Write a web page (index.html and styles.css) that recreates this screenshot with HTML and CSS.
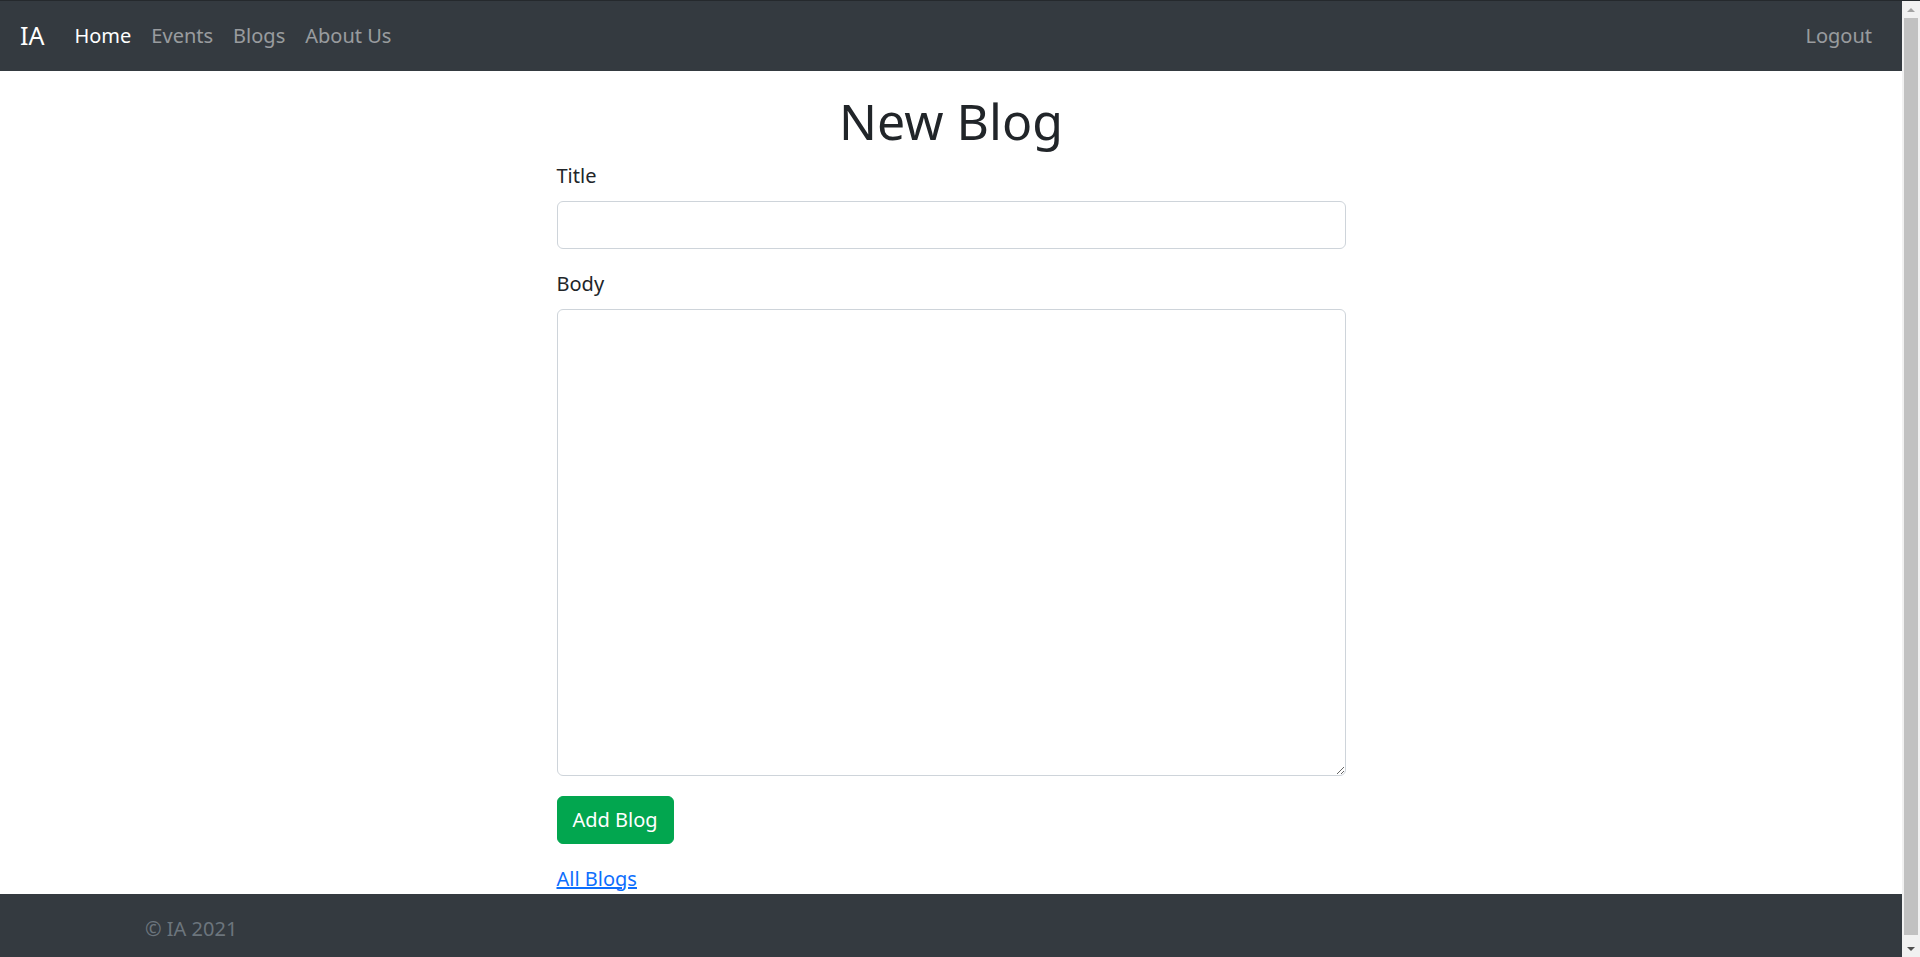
FILE: index.html
```html
<!DOCTYPE html>
<html lang="en">
<head>
<meta charset="utf-8">
<title>New Blog</title>
<link rel="stylesheet" href="styles.css">
</head>
<body>
<div class="page">
  <nav class="navbar">
    <a class="brand" href="#">IA</a>
    <ul class="nav-links">
      <li><a class="nav-link active" href="#">Home</a></li>
      <li><a class="nav-link" href="#">Events</a></li>
      <li><a class="nav-link" href="#">Blogs</a></li>
      <li><a class="nav-link" href="#">About Us</a></li>
    </ul>
    <a class="nav-link logout" href="#">Logout</a>
  </nav>
  <main class="main">
    <h1 class="page-title">New Blog</h1>
    <form class="blog-form">
      <div class="form-group">
        <label class="form-label" for="title">Title</label>
        <input class="form-control" id="title" type="text">
      </div>
      <div class="form-group">
        <label class="form-label" for="body">Body</label>
        <textarea class="form-control textarea" id="body"></textarea>
      </div>
      <button class="btn-success" type="button">Add Blog</button>
    </form>
    <a class="back-link" href="#">All Blogs</a>
  </main>
  <footer class="footer">
    <div class="footer-inner">© IA 2021</div>
  </footer>
</div>
<div class="scrollbar" aria-hidden="true">
  <div class="sb-btn"><svg width="8" height="4" viewBox="0 0 8 4"><polygon points="0,4 4,0 8,4" fill="#a3a3a3"/></svg></div>
  <div class="sb-track"><div class="sb-thumb"></div></div>
  <div class="sb-btn"><svg width="8" height="4" viewBox="0 0 8 4"><polygon points="0,0 8,0 4,4" fill="#505050"/></svg></div>
</div>
</body>
</html>
```
FILE: styles.css
```css
* { box-sizing: border-box; }
html, body { margin: 0; padding: 0; }
body {
  font-family: "Noto Sans", "Liberation Sans", sans-serif;
  font-size: 20px;
  line-height: 1.5;
  color: #212529;
  background: #fff;
  border-top: 1px solid #25292d;
  display: grid;
  grid-template-columns: minmax(0, 1fr) 18px;
  align-items: start;
}
.page { min-width: 0; }
.scrollbar {
  height: calc(100vh - 1px);
  background: #f1f1f1;
  display: flex;
  flex-direction: column;
}
.sb-btn {
  height: 17px;
  display: flex;
  align-items: center;
  justify-content: center;
}
.sb-track {
  flex: 1;
  padding: 0 2px 5px;
}
.sb-thumb {
  height: 100%;
  background: #c1c1c1;
}
.navbar {
  display: flex;
  align-items: center;
  height: 70px;
  padding: 0 20px;
  background: #343a40;
}
.brand {
  font-size: 25px;
  line-height: 37.5px;
  color: #fff;
  text-decoration: none;
  margin-right: 20px;
}
.nav-links {
  display: flex;
  list-style: none;
  margin: 0;
  padding: 0;
  flex: 1;
}
.nav-link {
  display: block;
  padding: 10px 10px;
  color: rgba(255,255,255,0.5);
  text-decoration: none;
  line-height: 30px;
}
.nav-link.active { color: #fff; }
.main {
  width: 789px;
  margin-left: calc(50% - 394.5px);
  padding-top: 20px;
}
.page-title {
  font-size: 50px;
  font-weight: 400;
  line-height: 60px;
  text-align: center;
  margin: 0 0 10px;
}
.form-group { margin-bottom: 20px; }
.form-label {
  display: block;
  margin-bottom: 10px;
  line-height: 30px;
}
.form-control {
  display: block;
  width: 100%;
  height: 47.5px;
  padding: 7.5px 15px;
  font: inherit;
  color: #495057;
  background: #fff;
  border: 1.25px solid #ced4da;
  border-radius: 6px;
}
.textarea {
  height: 467.5px;
  resize: vertical;
}
.btn-success {
  display: block;
  height: 47.5px;
  padding: 7.5px 15px;
  font: inherit;
  line-height: 30px;
  color: #fff;
  background: #02a64f;
  border: 1.25px solid #02a64f;
  border-radius: 6px;
  margin-bottom: 20px;
}
.back-link {
  display: inline-block;
  color: #0d6efd;
  text-decoration: underline;
  line-height: 30px;
}
.footer {
  background: #343a40;
  padding: 20px 0;
}
.footer-inner {
  width: 1650px;
  max-width: 100%;
  margin: 0 auto;
  padding: 0 15px 0 19px;
  color: #6c757d;
  line-height: 30px;
}
```
